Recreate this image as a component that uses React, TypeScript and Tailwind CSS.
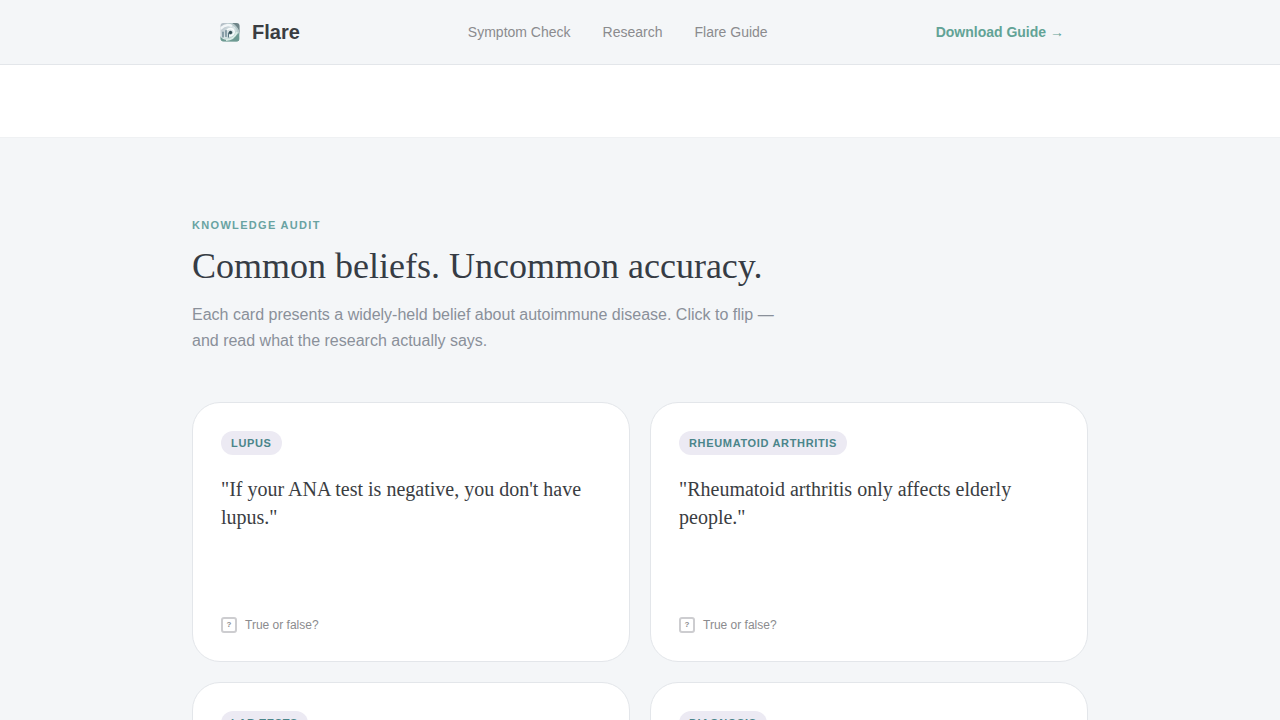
import React, { useState } from 'react';

interface Belief {
  id: string;
  topic: string;
  claim: string;
  verdict: string;
}

const NAV_LINKS = [
  { label: 'Symptom Check', href: '#symptoms' },
  { label: 'Research', href: '#research' },
  { label: 'Flare Guide', href: '#guide' },
];

const BELIEFS: Belief[] = [
  {
    id: 'lupus',
    topic: 'Lupus',
    claim: "If your ANA test is negative, you don't have lupus.",
    verdict: 'Mostly true, but a small share of people with lupus test negative.',
  },
  {
    id: 'ra',
    topic: 'Rheumatoid Arthritis',
    claim: 'Rheumatoid arthritis only affects elderly people.',
    verdict: 'False. Onset is most common between 30 and 60.',
  },
  {
    id: 'labs',
    topic: 'Lab Tests',
    claim: 'Normal lab results rule out autoimmune disease.',
    verdict: 'False. Diagnosis also depends on symptoms and history.',
  },
  {
    id: 'diagnosis',
    topic: 'Diagnosis',
    claim: 'Autoimmune disease is usually diagnosed quickly.',
    verdict: 'False. It often takes several years.',
  },
];

function Logo() {
  return (
    <svg viewBox="0 0 28 28" className="w-7 h-7" aria-hidden="true">
      <defs>
        <linearGradient id="tile" x1="0" y1="0" x2="1" y2="1">
          <stop offset="0" stopColor="#a9b3bd" />
          <stop offset="0.5" stopColor="#dbe6e8" />
          <stop offset="1" stopColor="#7fa8a0" />
        </linearGradient>
        <clipPath id="tile-clip">
          <rect x="4.5" y="5" width="19" height="18.500" rx="3" />
        </clipPath>
      </defs>
      <g clipPath="url(#tile-clip)">
        <rect x="4" y="4" width="20" height="20" fill="url(#tile)" />
        {/* dark upper right corner and the pale band that sweeps under it */}
        <path d="M14 4h10v13c-1-6-4-10-10-13z" fill="#6f8488" />
        <path d="M12 5c6 1 10 5 11 11" fill="none" stroke="#b4c8c9" strokeWidth="1.500" />
        <path d="M4 11c4-4 8-5 12-3" fill="none" stroke="#f2f6f8" strokeWidth="2.500" />
        {/* lower sweep */}
        <path d="M4 18c3 5 9 5 13 2l6-5v9H4z" fill="#6d9a92" />
        <path d="M10 22c5 0 9-3 11-8" fill="none" stroke="#d9ece6" strokeWidth="2" />
        <path d="M7 14v5M10 12.500v6M12.500 15v4" stroke="#587481" strokeWidth="1.200" strokeLinecap="round" />
        <path d="M11 12c2-2 6-2 7 1s-2 5-5 5" fill="none" stroke="#f8fcfc" strokeWidth="1.600" />
        <circle cx="14.500" cy="14.500" r="1.700" fill="#334e54" />
      </g>
    </svg>
  );
}

function BeliefCard({ belief }: { belief: Belief }) {
  const [flipped, setFlipped] = useState(false);

  return (
    <button
      type="button"
      onClick={() => setFlipped(!flipped)}
      className="flex flex-col items-start min-h-[260px] p-7 rounded-[28px] bg-white border border-[#e3e6ea] text-left cursor-pointer"
    >
      <span className="px-2.5 py-1 mb-5 rounded-full bg-[#eceaf3] text-[#4a858a] text-[11px] leading-4 font-bold uppercase tracking-[0.06em]">
        {belief.topic}
      </span>
      <span className="font-['Liberation_Serif',serif] text-xl leading-7 text-[#3a3d42]">
        {flipped ? belief.verdict : `"${belief.claim}"`}
      </span>
      <span className="mt-auto flex items-center gap-2 text-xs text-[#8b8b8e]">
        <span className="w-4 h-4 flex items-center justify-center rounded-[3px] border-2 border-[#cdcdd0] text-[8px] leading-none font-bold">
          ?
        </span>
        True or false?
      </span>
    </button>
  );
}

export default function App() {
  return (
    <div className="min-h-screen bg-white font-['Liberation_Sans',Arial,sans-serif]">
      <header className="sticky top-0 z-10 bg-[#f4f6f8] border-b border-[#e3e6ea]">
        <div className="max-w-4xl h-16 mx-auto px-6 flex items-center justify-between">
          <a href="#" className="flex items-center gap-2">
            <Logo />
            <span className="text-xl font-bold text-[#3a3d42]">Flare</span>
          </a>
          <nav className="flex items-center gap-8">
            {NAV_LINKS.map((link) => (
              <a key={link.href} href={link.href} className="text-sm text-[#8b8b8e]">
                {link.label}
              </a>
            ))}
          </nav>
          <a href="#download" className="text-sm font-bold text-[#62a396]">
            Download Guide →
          </a>
        </div>
      </header>

      <section className="mt-18 py-20 bg-[#f4f6f8] border-t border-[#eff1f3]">
        <div className="max-w-4xl mx-auto">
          <p className="mb-3.5 text-[11px] leading-3.5 font-bold uppercase tracking-[0.12em] text-[#69a3a2]">
            Knowledge Audit
          </p>
          <h2 className="mb-4 font-['Liberation_Serif',serif] text-4xl text-[#363c45]">
            Common beliefs. Uncommon accuracy.
          </h2>
          <p className="max-w-[600px] mb-12 text-base leading-[26px] text-[#8a909a]">
            Each card presents a widely-held belief about autoimmune disease. Click to flip — and read what the
            research actually says.
          </p>
          <div className="grid grid-cols-2 gap-5">
            {BELIEFS.map((belief) => (
              <BeliefCard key={belief.id} belief={belief} />
            ))}
          </div>
        </div>
      </section>
    </div>
  );
}
